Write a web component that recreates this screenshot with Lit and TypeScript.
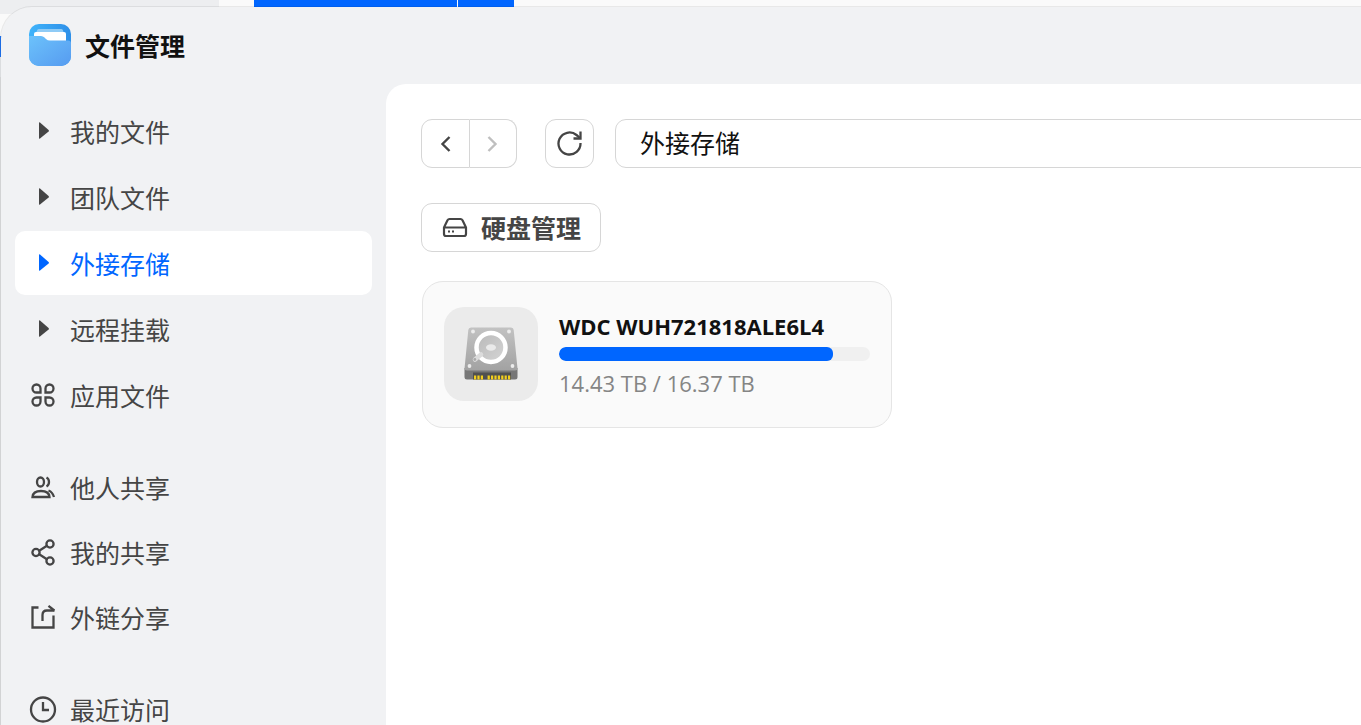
import { LitElement, html, css, svg, TemplateResult } from "lit";
import { customElement, property } from "lit/decorators.js";

const FONT = css`"Noto Sans", "Noto Sans CJK SC", sans-serif`;

const stroke = (body: TemplateResult) => html`<svg viewBox="0 0 28 28" width="28" height="28" fill="none"
  stroke="currentColor" stroke-width="2.3" aria-hidden="true">${body}</svg>`;

const icons: Record<string, TemplateResult> = {
  caret: html`<svg viewBox="0 0 28 28" width="28" height="28" aria-hidden="true">
    <path d="M10 6.500v14.400q0 1.200 1 .5L19.600 14.500q.7-.8 0-1.600L11 5.400q-1-.7-1 .5z" fill="currentColor"/></svg>`,
  apps: stroke(svg`
    <path d="M7.500 3.500a4 4 0 0 0 0 8H11.500V7.500A4 4 0 0 0 7.500 3.500z"/>
    <path d="M20.500 3.500a4 4 0 0 1 0 8H16.500V7.500A4 4 0 0 1 20.500 3.500z"/>
    <path d="M7.500 24.500a4 4 0 0 1 0-8H11.500V20.500A4 4 0 0 1 7.500 24.500z"/>
    <path d="M20.500 24.500a4 4 0 0 0 0-8H16.500V20.500A4 4 0 0 0 20.500 24.500z"/>`),
  people: stroke(svg`
    <ellipse cx="11.500" cy="9" rx="3.500" ry="4.500"/>
    <path d="M17.500 4.500q2.500 1.300 2.500 4.500t-2.500 4.500"/>
    <path d="M3.500 24q.5-6 8.500-6T20.500 24z"/>
    <path d="M19.500 17.500q4 1.500 5.500 6.500"/>`),
  share: stroke(svg`
    <circle cx="7" cy="14.500" r="3.600"/><circle cx="21" cy="6" r="3.600"/><circle cx="21" cy="23" r="3.600"/>
    <path d="M10.200 12.700l7.700-4.900M10.200 16.300l7.700 4.900"/>`),
  link: stroke(svg`
    <path d="M9.500 4.500H3.500V24.500H24.500V12.500"/>
    <path d="M13.500 18V12q0-4.500 4.500-4.500H25.500"/><path d="M19.500 2.800L25.300 7.500"/>`),
  clock: stroke(svg`<circle cx="14" cy="14.500" r="12"/><path d="M14 7V15H20"/>`),
};

interface Entry { icon: string; label: string; active?: boolean }

const groups: Entry[][] = [
  [
    { icon: "caret", label: "我的文件" },
    { icon: "caret", label: "团队文件" },
    { icon: "caret", label: "外接存储", active: true },
    { icon: "caret", label: "远程挂载" },
    { icon: "apps", label: "应用文件" },
  ],
  [
    { icon: "people", label: "他人共享" },
    { icon: "share", label: "我的共享" },
    { icon: "link", label: "外链分享" },
  ],
  [{ icon: "clock", label: "最近访问" }],
];

@customElement("side-nav")
class SideNav extends LitElement {
  static styles = css`
    :host { display: block; }
    .nav { display: flex; flex-direction: column; gap: 28px; padding: 15px 14px 0; }
    .group { display: flex; flex-direction: column; gap: 1px; margin: 0; padding: 0; list-style: none; }
    .group:first-child { gap: 2px; }
    .item {
      display: flex; align-items: center; gap: 13px; height: 64px; padding: 0 14px;
      border-radius: 10px; color: #454545; text-decoration: none;
      font: 25px/36px ${FONT};
    }
    .active { background: #fff; color: #0066ff; }
    .label { padding-top: 2px; }
    svg { flex: none; }
  `;
  render() {
    return html`<nav class="nav">${groups.map((g) => html`<ul class="group">${g.map((e) => html`
      <li><a href="#" class="item ${e.active ? "active" : ""}" aria-current=${e.active ? "page" : "false"}>${icons[e.icon]}<span class="label">${e.label}</span></a></li>`)}</ul>`)}</nav>`;
  }
}

@customElement("disk-card")
class DiskCard extends LitElement {
  @property() name = "";
  @property({ type: Number }) used = 0;
  @property({ type: Number }) total = 1;
  static styles = css`
    :host { display: block; }
    .card {
      box-sizing: border-box; display: flex; align-items: center; gap: 21px;
      padding: 25px 21px 26px; border: 1px solid #e5e5e5; border-radius: 21px; background: #fafafa;
      font: 22px/30px "Open Sans", sans-serif;
    }
    .tile { flex: none; display: grid; place-items: center; width: 94px; height: 94px; border-radius: 20px; background: #ebebeb; }
    .info { flex: 1; min-width: 0; }
    .name { margin: 0; color: #111; font-size: 22px; font-weight: 700; line-height: 30px; }
    .bar { height: 14px; margin: 6px 0 7px; border-radius: 7px; background: #f0f0f0; overflow: hidden; }
    .fill { height: 100%; border-radius: 6px; background: #0066ff; }
    .size { margin: 0; color: #858585; }
  `;
  render() {
    const pct = (this.used / this.total) * 100;
    const pins = [0, 1, 2, 4, 5, 6, 7, 8, 9, 10];
    return html`<article class="card">
      <div class="tile"><svg viewBox="0 0 54 54" width="54" height="54" aria-hidden="true">
        <defs>
          <linearGradient id="top" x1="0" y1="0" x2="0" y2="1"><stop offset="0" stop-color="#c2c2c2"/><stop offset="1" stop-color="#a2a2a2"/></linearGradient>
          <linearGradient id="disc" x1="0" y1="0" x2="1" y2="1"><stop offset="0" stop-color="#b8b8b8"/><stop offset="1" stop-color="#d6d6d6"/></linearGradient>
        </defs>
        <path d="M0.500 41H53.500V50Q53.500 52.500 51 52.500H3Q0.500 52.500 0.500 50z" fill="#777"/>
        <path d="M7 0.500H47Q49.500 .5 49.700 3L53.500 41.500Q53.500 43.500 51 43.500H3Q0.500 43.500 0.500 41.500L4.300 3Q4.500 .5 7 .5z" fill="url(#top)"/>
        <path d="M9 45.500H47V52.500H9z" fill="#505050"/>
        ${pins.map((p) => svg`<rect x=${10 + p * 3.4} y="48.500" width="2.200" height="4" fill="#f3cf1d"/>`)}
        <circle cx="27" cy="20.500" r="14.500" fill="url(#disc)" stroke="#fff" stroke-width="4.500"/>
        <ellipse cx="27" cy="20.500" rx="5" ry="3.300" fill="#eaeaea"/>
        <path d="M17 27.500L11 32.500" stroke="#dcdcdc" stroke-width="4.500" stroke-linecap="round"/>
        <circle cx="10.800" cy="32.500" r="1.400" fill="#aaa"/>
        <g fill="#ececec"><circle cx="9" cy="4.500" r="1.900"/><circle cx="45" cy="4.500" r="1.900"/><circle cx="5.500" cy="39" r="1.900"/><circle cx="48.500" cy="39" r="1.900"/></g>
      </svg></div>
      <div class="info">
        <h2 class="name">${this.name}</h2>
        <div class="bar" role="progressbar" aria-label=${this.name} aria-valuenow=${Math.round(pct)}><div class="fill" style="width:${pct}%"></div></div>
        <p class="size">${this.used} TB / ${this.total} TB</p>
      </div>
    </article>`;
  }
}

@customElement("app-root")
class AppRoot extends LitElement {
  static styles = css`
    :host { display: block; position: relative; height: 100vh; overflow: hidden; background: #fafafa; }
    .desk { position: absolute; inset: 0; display: flex; }
    .panel { width: 219px; height: 14px; background: #edeef0; }
    .edge { position: absolute; left: 0; top: 36px; bottom: 0; width: 3px; background: linear-gradient(#1f75f5 21px, #eceef0 21px, #eceef0 41px, #e2e3e5 41px); }
    .tabs { display: flex; gap: 1px; height: 20px; margin-left: 35px; }
    .tab { width: 203px; background: #0066ff; }
    .tab.small { width: 56px; }
    .window {
      position: relative; box-sizing: border-box; height: calc(100% - 6px); margin-top: 6px; overflow: hidden;
      display: grid; grid-template: auto 1fr / 385px 1fr;
      border: 0 solid rgba(0, 0, 0, 0.07); border-width: 1px 0 0 1px; border-top-left-radius: 32px;
      background: #f1f2f4 padding-box;
    }
    .head { grid-column: 1 / -1; display: flex; align-items: center; gap: 14px; height: 77px; padding: 0 28px 2px; box-sizing: border-box; }
    .title { margin: 0; padding-top: 2px; color: #111; font: 700 25px/36px ${FONT}; }
    .side { display: block; min-height: 0; }
    .main { min-width: 0; background: #fff; border-top-left-radius: 20px; padding: 35px 0 0 35px; }
    .bar { display: flex; }
    button { box-sizing: border-box; display: flex; align-items: center; justify-content: center; height: 49px; padding: 0; border: 1px solid #d6d6d6; background: #fff; color: #454545; border-radius: 11px; }
    .pair { display: flex; margin-right: 28px; }
    .back { width: 49px; border-radius: 11px 0 0 11px; }
    .next { width: 47px; border-left: 0; border-radius: 0 11px 11px 0; color: #bfbfbf; }
    .reload { width: 49px; margin-right: 21px; }
    .path {
      flex: 1; min-width: 0; box-sizing: border-box; height: 49px; padding: 0 24px 4px; margin-right: -12px; color: #111;
      border: 1px solid #d6d6d6; border-radius: 11px; background: #fff; outline: 0; font: 25px/36px ${FONT};
    }
    .manage { gap: 12px; width: 180px; margin: 35px 0 29px; font: 700 25px/36px ${FONT}; }
    disk-card { width: 470px; max-width: 100%; margin-left: 1px; }
  `;
  render() {
    return html`
      <div class="desk"><div class="panel"></div><div class="tabs"><div class="tab"></div><div class="tab small"></div></div><div class="edge"></div></div>
      <div class="window">
        <header class="head">
          <svg viewBox="0 0 42 42" width="42" height="42" aria-hidden="true">
            <defs>
              <linearGradient id="bg" x1="0" y1="0" x2="1" y2="0"><stop offset="0" stop-color="#40b4fb"/><stop offset="1" stop-color="#2e8fe8"/></linearGradient>
              <linearGradient id="fg" x1="0" y1="0" x2="1" y2="1"><stop offset="0" stop-color="#6cc2fb"/><stop offset="1" stop-color="#569bf0"/></linearGradient>
              <clipPath id="clip"><rect width="42" height="42" rx="10"/></clipPath>
            </defs>
            <g clip-path="url(#clip)">
              <path d="M0 0H42V42H0z" fill="url(#bg)"/>
              <path d="M9.500 5H32.500Q34 5 34.500 8H7.500Q8 5 9.500 5z" fill="#8fcbf6"/>
              <path d="M7 8H35Q37 8 37 10V20H5V10Q5 8 7 8z" fill="#fff"/>
              <path d="M0 12H12Q14 12 15.500 13.500L17 15Q18.500 16.500 21 16.500H39Q42 16.500 42 19V42H0z" fill="url(#fg)"/>
            </g>
          </svg>
          <h1 class="title">文件管理</h1>
        </header>
        <side-nav class="side"></side-nav>
        <main class="main">
          <div class="bar">
            <div class="pair">
              <button class="back" aria-label="后退"><svg viewBox="0 0 20 20" width="20" height="20" fill="none" stroke="currentColor" stroke-width="2.400"><path d="M13.500 3L6.500 10L13.500 17"/></svg></button>
              <button class="next" aria-label="前进"><svg viewBox="0 0 20 20" width="20" height="20" fill="none" stroke="currentColor" stroke-width="2.400"><path d="M5.500 3L12.500 10L5.500 17"/></svg></button>
            </div>
            <button class="reload" aria-label="刷新"><svg viewBox="0 0 28 28" width="28" height="28" fill="none" stroke="currentColor" stroke-width="2.300"><path d="M24.500 13A11 11 0 1 1 20.500 5L24 8"/><path d="M24.500 1.500V8.500H17.500"/></svg></button>
            <input class="path" aria-label="路径" value="外接存储" />
          </div>
          <button class="manage"><svg viewBox="0 0 28 28" width="28" height="28" fill="none" stroke="currentColor" stroke-width="2.200" stroke-linejoin="round"><path d="M8.500 5H19.500Q20.800 5 21.500 6.200L25 13.500V20Q25 22 23 22H5Q3 22 3 20V13.500L6.500 6.200Q7.200 5 8.500 5zM3 13.500H25"/><path d="M7 17.500h2M11 17.500h2"/></svg><span>硬盘管理</span></button>
          <disk-card name="WDC WUH721818ALE6L4" used="14.43" total="16.37"></disk-card>
        </main>
      </div>`;
  }
}
